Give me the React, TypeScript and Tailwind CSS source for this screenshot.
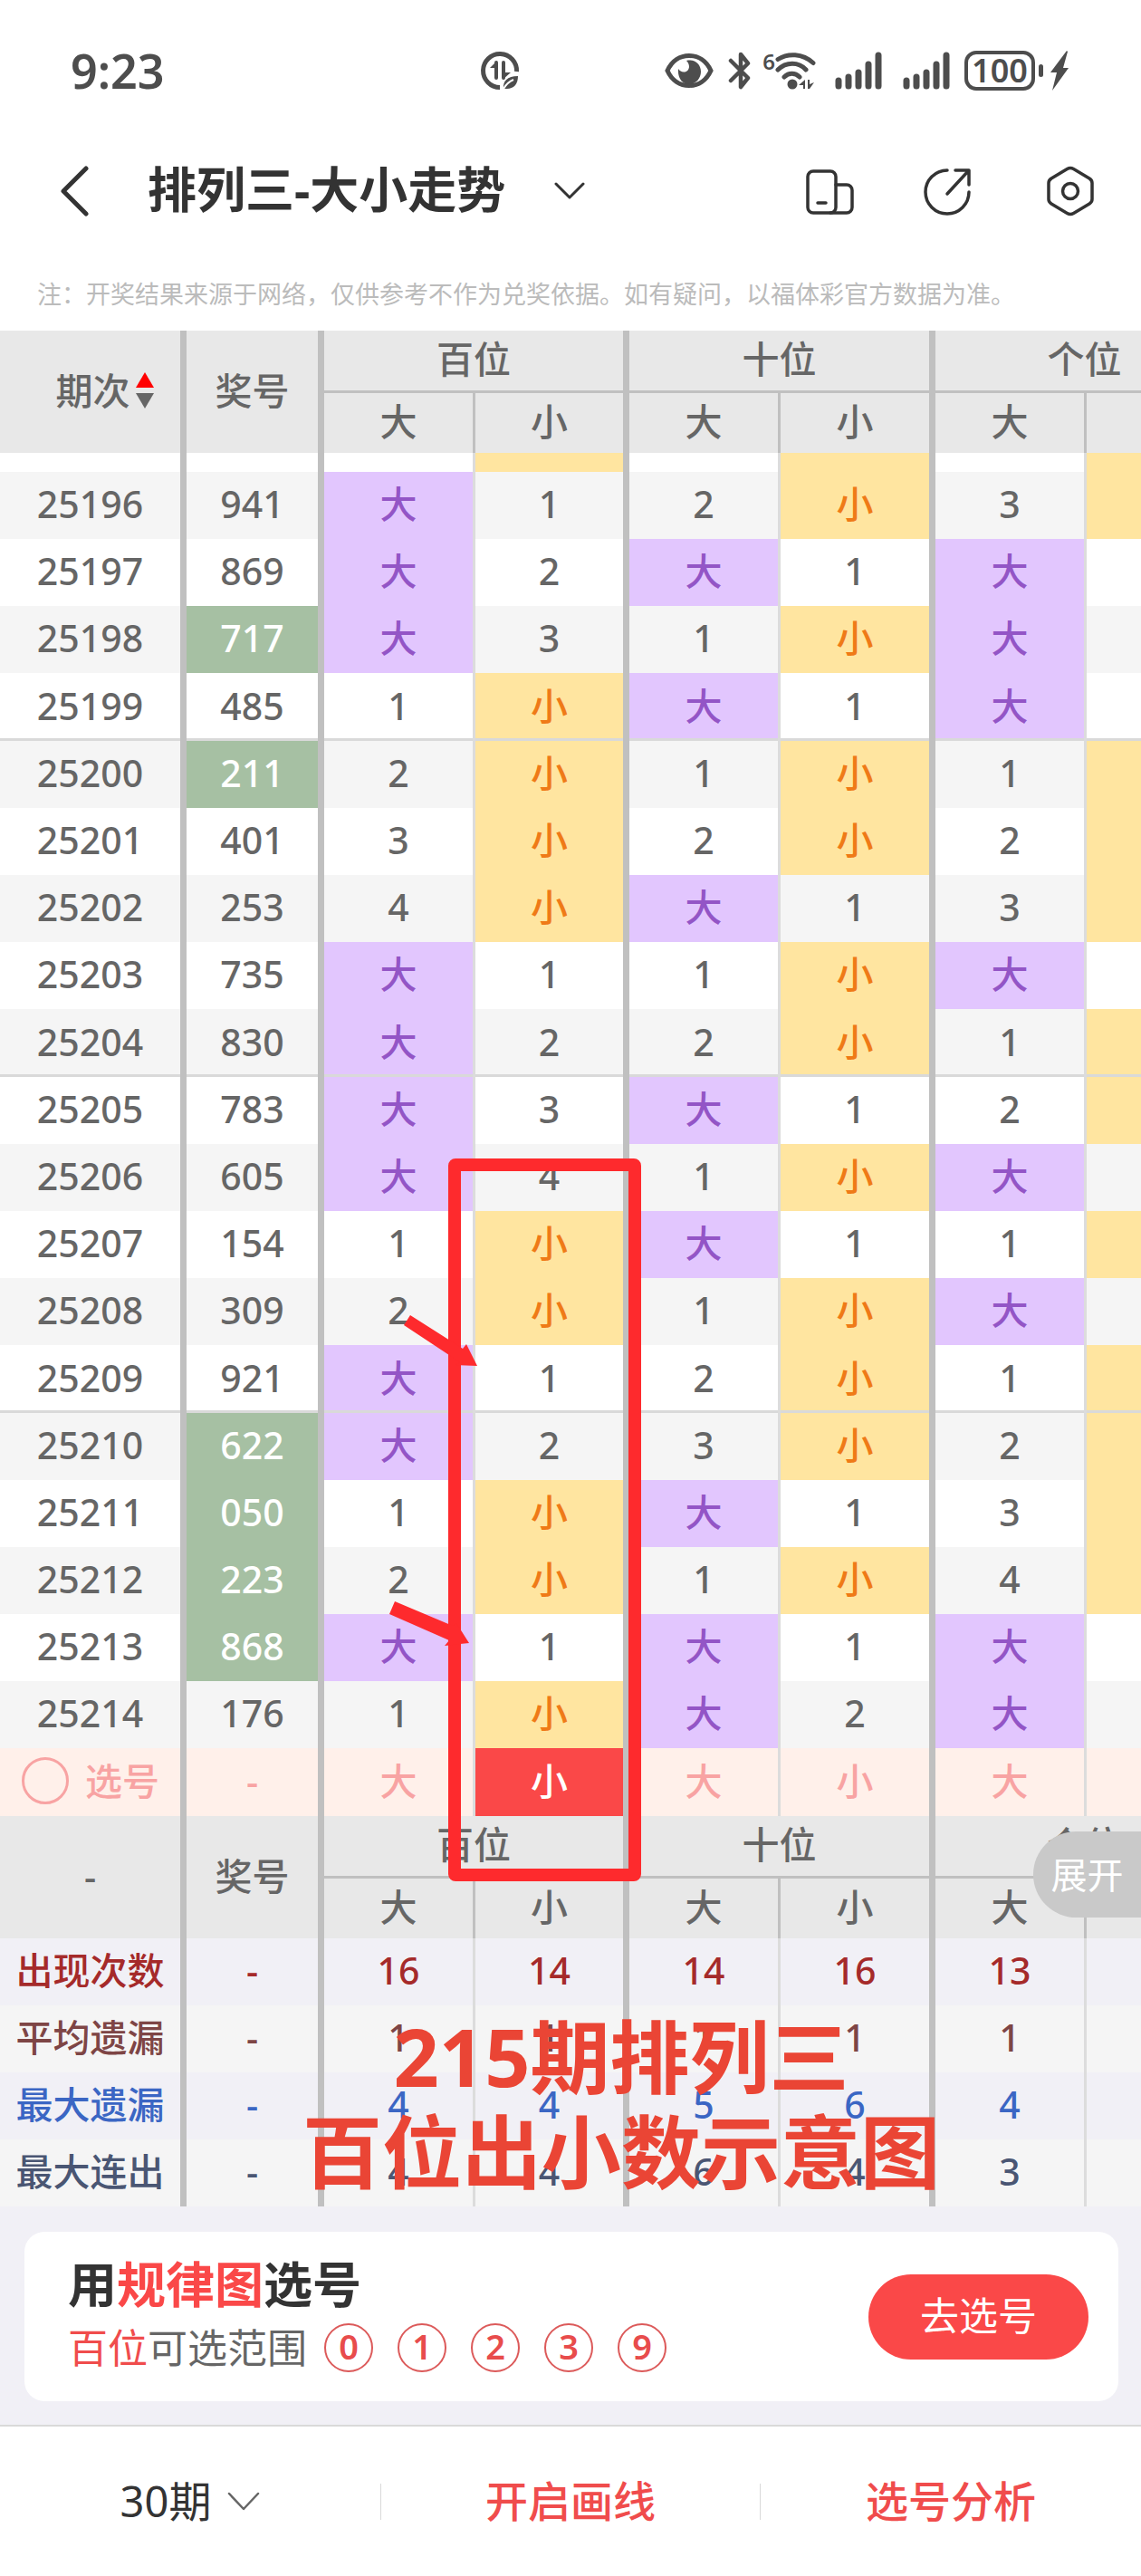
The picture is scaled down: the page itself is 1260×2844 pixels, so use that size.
import React from 'react';

type Side = '大' | '小';
// which side came out, and how many draws the other side has been missing
type Pair = [Side, number];

interface Draw {
  issue: string;
  digits: string;
  repeat?: boolean;
  pairs: [Pair, Pair, Pair];
}

const POSITIONS = ['百位', '十位', '个位'];

const DRAWS: Draw[] = [
  { issue: '25196', digits: '941', pairs: [['大', 1], ['小', 2], ['小', 3]] },
  { issue: '25197', digits: '869', pairs: [['大', 2], ['大', 1], ['大', 1]] },
  { issue: '25198', digits: '717', repeat: true, pairs: [['大', 3], ['小', 1], ['大', 2]] },
  { issue: '25199', digits: '485', pairs: [['小', 1], ['大', 1], ['大', 3]] },
  { issue: '25200', digits: '211', repeat: true, pairs: [['小', 2], ['小', 1], ['小', 1]] },
  { issue: '25201', digits: '401', pairs: [['小', 3], ['小', 2], ['小', 2]] },
  { issue: '25202', digits: '253', pairs: [['小', 4], ['大', 1], ['小', 3]] },
  { issue: '25203', digits: '735', pairs: [['大', 1], ['小', 1], ['大', 1]] },
  { issue: '25204', digits: '830', pairs: [['大', 2], ['小', 2], ['小', 1]] },
  { issue: '25205', digits: '783', pairs: [['大', 3], ['大', 1], ['小', 2]] },
  { issue: '25206', digits: '605', pairs: [['大', 4], ['小', 1], ['大', 1]] },
  { issue: '25207', digits: '154', pairs: [['小', 1], ['大', 1], ['小', 1]] },
  { issue: '25208', digits: '309', pairs: [['小', 2], ['小', 1], ['大', 1]] },
  { issue: '25209', digits: '921', pairs: [['大', 1], ['小', 2], ['小', 1]] },
  { issue: '25210', digits: '622', repeat: true, pairs: [['大', 2], ['小', 3], ['小', 2]] },
  { issue: '25211', digits: '050', repeat: true, pairs: [['小', 1], ['大', 1], ['小', 3]] },
  { issue: '25212', digits: '223', repeat: true, pairs: [['小', 2], ['小', 1], ['小', 4]] },
  { issue: '25213', digits: '868', repeat: true, pairs: [['大', 1], ['大', 1], ['大', 1]] },
  { issue: '25214', digits: '176', pairs: [['小', 1], ['大', 2], ['大', 2]] },
];

const STATS = [
  { label: '出现次数', values: [16, 14, 14, 16, 13, 17], color: 'text-[#a52a2a]', bg: 'bg-[#f1f0f6]' },
  { label: '平均遗漏', values: [1, 1, 1, 1, 1, 1], color: 'text-[#7e4545]', bg: 'bg-[#f5f5f5]' },
  { label: '最大遗漏', values: [4, 4, 5, 6, 4, 3], color: 'text-[#3b66c4]', bg: 'bg-[#f1f0f6]' },
  { label: '最大连出', values: [4, 4, 6, 4, 3, 4], color: 'text-[#4a5673]', bg: 'bg-[#f5f5f5]' },
];

const THICK = 'border-r-7 border-[#c0c0c0]';
const THIN = 'border-r-3 border-[#dcdcdc]';
const THIN_DARK = 'border-r-3 border-[#c0c0c0]';

const Signal: React.FC = () => (
  <svg className="w-[52px] h-[42px]" viewBox="0 0 52 42" stroke="currentColor" strokeWidth={7} strokeLinecap="round">
    <path d="M4 32v6M15 28v10M26 23v15M37 14v24M48 4v34" />
  </svg>
);

const StatusBar: React.FC = () => (
  <div className="h-[156px] pl-[78px] pr-[80px] flex items-center justify-between text-[#4d4d4d]">
    <span className="w-[360px] text-[52px] font-semibold leading-none">9:23</span>
    <svg className="w-[44px] h-[44px] mr-auto ml-[92px]" viewBox="0 0 44 44" fill="none" stroke="currentColor">
      <path d="M40.500 23A18.500 18.500 0 1 0 22 40.500" strokeWidth={5} />
      <path d="M18 13v17M26 13v17" strokeWidth={4} strokeLinecap="round" />
      <path d="M19 11v8h-8zM25 32v-8h9z" fill="currentColor" stroke="none" />
      <path d="M26 42c-1-8 4-14 16-14 0 9-5 14-12 14l-2 0z" fill="currentColor" stroke="none" />
      <path d="M26 42c3-5 6-8 11-10" stroke="white" strokeWidth={2} />
    </svg>
    <div className="flex items-center">
      <svg className="w-[54px] h-[40px]" viewBox="0 0 54 40" fill="none" stroke="currentColor">
        <path d="M3 20C8 9 17 3.500 27 3.500S46 9 51 20C46 31 37 36.500 27 36.500S8 31 3 20z" strokeWidth={5} />
        <path d="M24 9c9-2 16 4 16 12s-6 14-13 14-13-6-12-17c3 5 11 5 12-2 0-3-1-5-3-7z" fill="currentColor" stroke="none" />
      </svg>
      <svg className="w-[26px] h-[42px] ml-4" viewBox="0 0 26 42" fill="none" stroke="currentColor" strokeWidth={4.500} strokeLinecap="round" strokeLinejoin="round">
        <path d="M3 10l19 19-8 10V3l8 10L3 32" />
      </svg>
      <span className="ml-3 mb-5 text-[24px] font-semibold leading-none">6</span>
      <svg className="w-[46px] h-[42px]" viewBox="0 0 46 42" fill="none" stroke="currentColor" strokeWidth={5} strokeLinecap="round">
        <path d="M3 8.500C14 1.500 30 1.500 42 12.500M3 20c9-9 23-9 31 0M10 28c5-5 12-5 17 0" />
        <circle cx={19} cy={36} r={5.500} fill="currentColor" stroke="none" />
        <path d="M33 31v10h-2v-4h-5zM36 31h2v5l5-2-5 7h-2z" fill="currentColor" stroke="none" />
      </svg>
      <div className="ml-[20px] flex gap-[23px]">
        <Signal />
        <Signal />
      </div>
      <div className="ml-4 w-[78px] h-[44px] rounded-[13px] border-4 border-current flex items-center justify-center text-[36px] font-semibold leading-none">
        100
      </div>
      <span className="ml-1 w-[5px] h-[14px] rounded-full bg-current" />
      <svg className="ml-2 w-[20px] h-[44px]" viewBox="0 0 20 44" fill="currentColor">
        <path d="M18 0L0 24h7L2 44 20 19h-6l5-18z" />
      </svg>
    </div>
  </div>
);

const TitleBar: React.FC = () => (
  <header className="h-[110px] pl-[65px] pr-[50px] flex items-center text-[#333]">
    <button type="button" aria-label="返回">
      <svg className="w-[34px] h-[56px]" viewBox="0 0 34 56" fill="none" stroke="currentColor" strokeWidth={5} strokeLinecap="round" strokeLinejoin="round">
        <path d="M30 3L5 28l25 25" />
      </svg>
    </button>
    <h1 className="ml-16 pb-1 text-[54px] font-bold leading-none whitespace-nowrap">排列三-大小走势</h1>
    <button type="button" aria-label="切换走势" className="ml-[54px]">
      <svg className="w-[34px] h-[20px]" viewBox="0 0 34 20" fill="none" stroke="currentColor" strokeWidth={3} strokeLinecap="round" strokeLinejoin="round">
        <path d="M2 2l15 15L32 2" />
      </svg>
    </button>
    <div className="ml-auto flex items-center gap-[76px]">
      <button type="button" aria-label="横竖屏">
        <svg className="w-[54px] h-[54px]" viewBox="0 0 54 54" fill="none" stroke="currentColor" strokeWidth={3.500} strokeLinecap="round" strokeLinejoin="round">
          <rect x={2} y={5} width={31} height={46} rx={6} />
          <path d="M33 20h12a6 6 0 0 1 6 6v19a6 6 0 0 1-6 6H27M13 40h9" />
        </svg>
      </button>
      <button type="button" aria-label="分享">
        <svg className="w-[54px] h-[54px]" viewBox="0 0 54 54" fill="none" stroke="currentColor" strokeWidth={3.500} strokeLinecap="round" strokeLinejoin="round">
          <path d="M26 4a24 24 0 1 0 24 24M35 4h15v16M50 4L26 30" />
        </svg>
      </button>
      <button type="button" aria-label="设置" className="ml-1">
        <svg className="w-[56px] h-[56px]" viewBox="0 0 56 56" fill="none" stroke="currentColor" strokeWidth={3.500} strokeLinejoin="round">
          <path d="M24.500 3.500q3.500-2 7 0L49 14q3 2 3 5v18q0 3-3 5L31.500 52.500q-3.500 2-7 0L7 42q-3-2-3-5V19q0-3 3-5z" />
          <circle cx={28} cy={28} r={8.500} />
        </svg>
      </button>
    </div>
  </header>
);

const GroupHead: React.FC<{ first: React.ReactNode }> = ({ first }) => (
  <>
    <tr className="h-[69px] bg-[#e8e8e8] text-[#666]">
      <th rowSpan={2} className={`font-medium ${THICK}`}>{first}</th>
      <th rowSpan={2} className={`font-medium ${THICK}`}>奖号</th>
      {POSITIONS.map((p) => (
        <th key={p} colSpan={2} className={`font-medium border-b-3 ${THICK}`}>{p}</th>
      ))}
    </tr>
    <tr className="h-[66px] bg-[#e8e8e8] text-[#666]">
      {POSITIONS.map((p) => (
        <React.Fragment key={p}>
          <th className={`font-medium ${THIN_DARK}`}>大</th>
          <th className={`font-medium ${THICK}`}>小</th>
        </React.Fragment>
      ))}
    </tr>
  </>
);

const DrawRow: React.FC<{ draw: Draw; index: number }> = ({ draw, index }) => {
  // a rule closes every group of five issues
  const last = /[49]$/.test(draw.issue) && index < DRAWS.length - 1;
  const rule = last ? 'shadow-[inset_0_-3px_0_#d9d9d9]' : '';
  return (
    <tr className={`${last ? 'h-[75px]' : 'h-[74px]'} ${index % 2 ? 'bg-white' : 'bg-[#f5f5f5]'} text-[#666]`}>
      <td className={`${THICK} ${rule}`}>{draw.issue}</td>
      <td className={`${THICK} ${rule} ${draw.repeat ? 'bg-[#a6c0a3] text-white' : ''}`}>{draw.digits}</td>
      {draw.pairs.map(([side, miss], i) => (
        <React.Fragment key={i}>
          <td className={`${THIN} ${rule} ${side === '大' ? 'bg-[#e2c6fe] text-[#9355c6]' : ''}`}>
            {side === '大' ? '大' : miss}
          </td>
          <td className={`${THICK} ${rule} ${side === '小' ? 'bg-[#ffe5a0] text-[#ef7a17]' : ''}`}>
            {side === '小' ? '小' : miss}
          </td>
        </React.Fragment>
      ))}
    </tr>
  );
};

const TrendTable: React.FC = () => (
  <table className="w-[1369px] table-fixed border-separate border-spacing-0 text-center text-[41px] leading-[48px] font-medium [&_td]:p-0 [&_th]:p-0 [&_td]:pb-1 [&_th]:pb-1">
    <colgroup>
      <col className="w-[206px]" />
      <col className="w-[152px]" />
      <col className="w-[167px]" />
      <col className="w-[170px]" />
      <col className="w-[167px]" />
      <col className="w-[171px]" />
      <col className="w-[167px]" />
      <col className="w-[169px]" />
    </colgroup>
    <thead>
      <GroupHead
        first={
          <button type="button" className="pl-8 inline-flex items-center gap-1.5">
            期次
            <svg className="w-[20px] h-[42px]" viewBox="0 0 20 42">
              <path d="M10 1l10 17H0z" fill="#ff0000" />
              <path d="M10 41L0 24h20z" fill="#666" />
            </svg>
          </button>
        }
      />
    </thead>
    <tbody>
      {/* tail of the row scrolled under the header */}
      <tr className="h-[21px] bg-white">
        <td className={THICK} />
        <td className={THICK} />
        {POSITIONS.map((p) => (
          <React.Fragment key={p}>
            <td className={THIN} />
            <td className={`${THICK} bg-[#ffe5a0]`} />
          </React.Fragment>
        ))}
      </tr>
      {DRAWS.map((d, i) => (
        <DrawRow key={d.issue} draw={d} index={i} />
      ))}
      <tr className="h-[75px] bg-[#fff0ea] text-[#f8a3a3]">
        <td className={THICK}>
          <label className="pl-6 flex items-center gap-[18px]">
            <input type="checkbox" className="appearance-none w-[52px] h-[52px] rounded-full border-3 border-current" />
            选号
          </label>
        </td>
        <td className={THICK}>-</td>
        {POSITIONS.map((p, i) => (
          <React.Fragment key={p}>
            <td className={THIN}>
              <button type="button" className="w-full">大</button>
            </td>
            <td className={`${THICK} ${i === 0 ? 'bg-[#fa4848] text-white' : ''}`}>
              <button type="button" className="w-full">小</button>
            </td>
          </React.Fragment>
        ))}
      </tr>
      <GroupHead first="-" />
      {STATS.map((s) => (
        <tr key={s.label} className={`h-[74px] ${s.bg} ${s.color}`}>
          <td className={THICK}>{s.label}</td>
          <td className={THICK}>-</td>
          {s.values.map((v, i) => (
            <td key={i} className={i % 2 ? THICK : THIN}>{v}</td>
          ))}
        </tr>
      ))}
    </tbody>
  </table>
);

// Hand-drawn marks laid over the chart
const Marks: React.FC = () => (
  <>
    <div className="absolute left-[495px] top-[914px] w-[213px] h-[798px] rounded-lg border-14 border-[#fe2a2d] pointer-events-none" />
    <svg className="absolute left-[420px] top-[1070px] w-[120px] h-[400px] pointer-events-none" viewBox="0 0 120 400" fill="#fe2a2d">
      <path d="M33 17L91 54l4-5 12 24-24-1 5-3-62-41z" />
      <path d="M16 333l64 27 4-3 14 22-27 3 5-6-66-29z" />
    </svg>
    <p className="absolute left-[334px] top-[1853px] w-[704px] text-center text-[88px] leading-[105px] font-bold text-[#ea4535] whitespace-nowrap pointer-events-none">
      215期排列三
      <br />
      百位出小数示意图
    </p>
  </>
);

const PickCard: React.FC = () => (
  <section className="pt-7 pb-[26px] pl-[27px] pr-[25px] bg-[#f1f0f6]">
    <div className="h-[187px] pl-[48px] pr-[33px] rounded-[22px] bg-white flex items-center justify-between">
      <div className="pb-2 flex flex-col gap-2">
        <h2 className="text-[54px] leading-[68px] font-bold text-[#333]">
          用<span className="text-[#fa4848]">规律图</span>选号
        </h2>
        <div className="flex items-center text-[44px] leading-[56px] text-[#666]">
          <span className="text-[#f04c4c]">百位</span>可选范围
          <div className="ml-[19px] flex gap-[27px]">
            {[0, 1, 2, 3, 9].map((n) => (
              <span
                key={n}
                className="w-[54px] h-[54px] pb-1 rounded-full border-2 border-[#dc5a5a] flex items-center justify-center text-[38px] leading-none font-semibold text-[#e84c4c]"
              >
                {n}
              </span>
            ))}
          </div>
        </div>
      </div>
      <button type="button" className="w-[243px] h-[94px] rounded-full bg-[#fa4848] text-[43px] text-white">
        去选号
      </button>
    </div>
  </section>
);

const Toolbar: React.FC = () => (
  <nav className="h-[167px] border-t-2 border-[#d9d9d9] bg-white grid grid-cols-3 items-center text-[47px] leading-none text-[#f04c4c]">
    <button type="button" className="flex items-center justify-center gap-[18px] text-[#333]">
      30期
      <svg className="w-[36px] h-[22px]" viewBox="0 0 36 22" fill="none" stroke="#666" strokeWidth={2.500} strokeLinecap="round" strokeLinejoin="round">
        <path d="M2 2l16 17L34 2" />
      </svg>
    </button>
    <div className="h-[40px] border-x border-[#d9d9d9] flex items-center justify-center">
      <button type="button" className="font-medium">开启画线</button>
    </div>
    <button type="button" className="font-medium">选号分析</button>
  </nav>
);

const App: React.FC = () => {
  return (
    <div className="min-h-screen bg-white flex flex-col font-['Noto_Sans','Noto_Sans_CJK_SC',sans-serif]">
      <StatusBar />
      <TitleBar />
      <p className="pt-10 pb-[21px] px-[41px] text-[27px] leading-[38px] text-[#bbb] whitespace-nowrap">
        注：开奖结果来源于网络，仅供参考不作为兑奖依据。如有疑问，以福体彩官方数据为准。
      </p>
      <main className="relative overflow-hidden">
        <TrendTable />
        <button
          type="button"
          className="absolute right-0 top-[1657px] w-[119px] h-[95px] rounded-l-full bg-[#c9c9c9] text-[40px] text-white"
        >
          展开
        </button>
        <Marks />
      </main>
      <PickCard />
      <Toolbar />
    </div>
  );
};

export default App;
